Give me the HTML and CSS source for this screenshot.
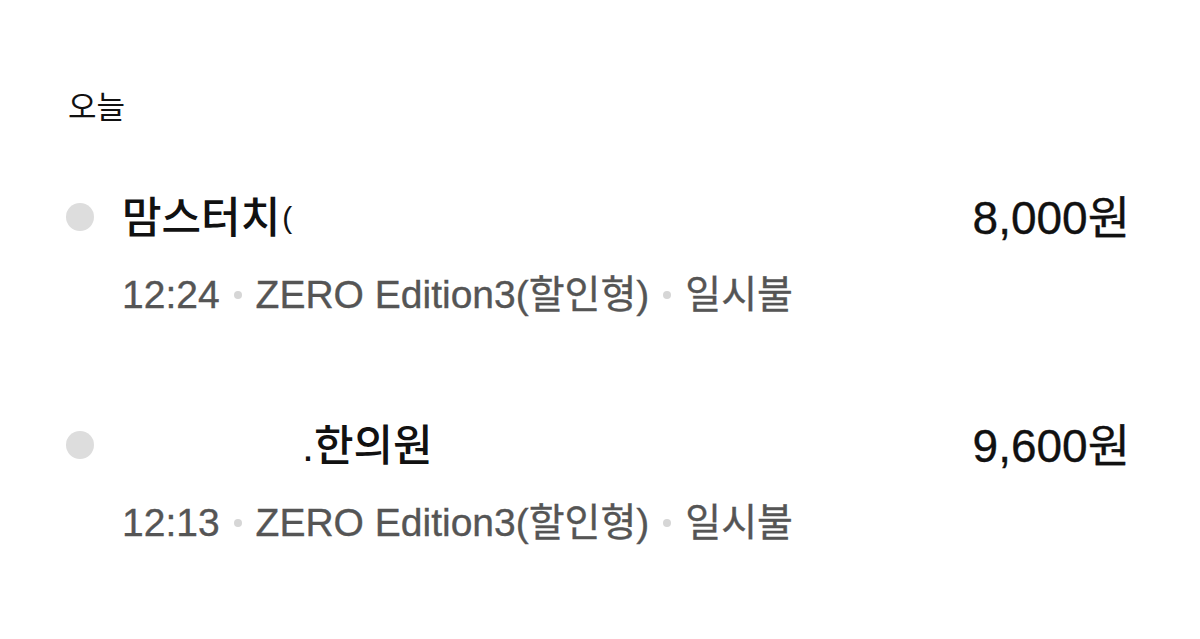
FILE: index.html
```html
<!DOCTYPE html>
<html lang="ko">
<head>
<meta charset="utf-8">
<title>결제 내역</title>
<link rel="stylesheet" href="styles.css">
</head>
<body>
<main class="history">
  <h2 class="day">오늘</h2>
  <ul class="list">
    <li class="item">
      <span class="marker"></span>
      <div class="info">
        <div class="title"><span>맘스터치</span><span class="tail">(</span></div>
        <div class="meta">
          <span>12:24</span><i class="sep"></i>
          <span>ZERO Edition3(할인형)</span><i class="sep"></i>
          <span>일시불</span>
        </div>
      </div>
      <div class="amount">8,000원</div>
    </li>
    <li class="item">
      <span class="marker"></span>
      <div class="info">
        <div class="title"><span class="hidden"></span><span>.한의원</span></div>
        <div class="meta">
          <span>12:13</span><i class="sep"></i>
          <span>ZERO Edition3(할인형)</span><i class="sep"></i>
          <span>일시불</span>
        </div>
      </div>
      <div class="amount">9,600원</div>
    </li>
  </ul>
</main>
</body>
</html>
```
FILE: styles.css
```css
* { box-sizing: border-box; }

html, body {
  margin: 0;
  background: #ffffff;
}

body {
  font-family: "Liberation Sans", "Noto Sans CJK KR", sans-serif;
  color: #111111;
}

.history {
  padding: 90px 70px 0 66px;
}

.day {
  margin: 0 0 0 2px;
  font-size: 31px;
  font-weight: 400;
  line-height: 36px;
  color: #111;
}

.list {
  list-style: none;
  margin: 68px 0 0;
  padding: 0;
  display: flex;
  flex-direction: column;
  gap: 105px;
}

.item {
  display: flex;
  align-items: flex-start;
}

.marker {
  flex: none;
  width: 28px;
  height: 28px;
  margin-top: 9px;
  border-radius: 50%;
  background: #dddddd;
}

.info {
  flex: 1;
  margin-left: 28px;
  display: flex;
  flex-direction: column;
  gap: 31px;
}

.title {
  display: flex;
  align-items: center;
  font-size: 43px;
  font-weight: 500;
  line-height: 48px;
  color: #111;
}

.tail {
  font-size: 30px;
  font-weight: 400;
  margin-left: 2px;
}

.hidden {
  display: inline-block;
  width: 180px;
}

.meta {
  display: flex;
  align-items: center;
  font-size: 39px;
  line-height: 44px;
  color: #555555;
  -webkit-text-stroke: 0.35px #555555;
}

.sep {
  width: 8px;
  height: 8px;
  margin: 0 14px;
  border-radius: 50%;
  background: #d6d6d6;
}

.amount {
  flex: none;
  font-size: 46px;
  line-height: 48px;
  color: #111;
  -webkit-text-stroke: 0.35px #111;
}
```
